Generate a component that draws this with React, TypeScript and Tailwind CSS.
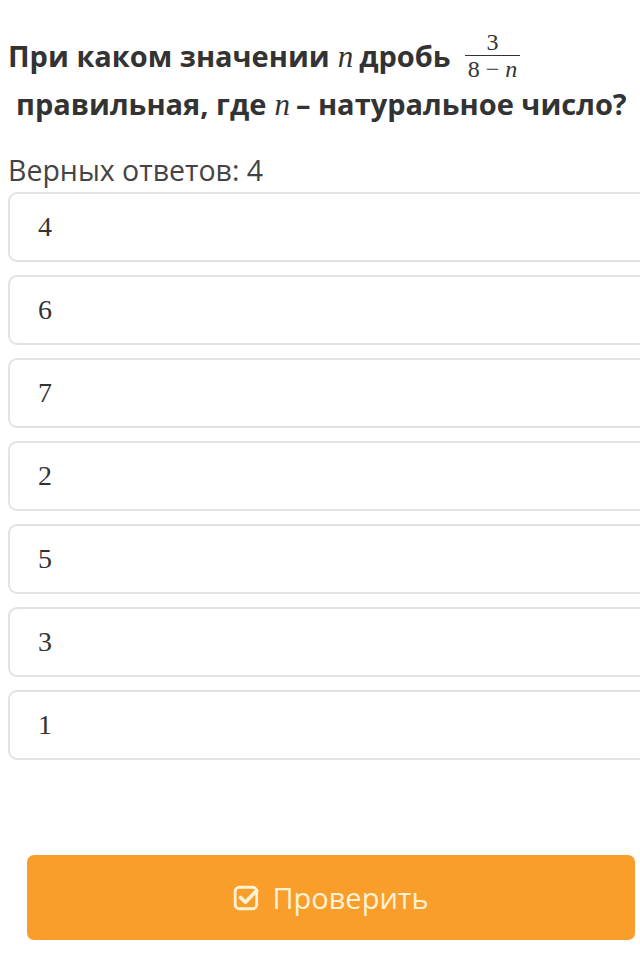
import React from "react";

const answers = ["4", "6", "7", "2", "5", "3", "1"];

function N() {
  return <span style={{ fontFamily: "'Liberation Serif', serif" }} className="italic font-normal">n</span>;
}

export default function App() {
  return (
    <div className="w-[640px] h-[962px] bg-white overflow-hidden relative" style={{ fontFamily: "'Open Sans', sans-serif" }}>
      <div className="pl-[8px] pt-[30px]">
        <div className="flex items-center h-[52px] text-[29px] font-bold text-[#333333] whitespace-nowrap">
          <span>При каком значении</span>
          <span className="ml-[8px] text-[31px]"><N /></span>
          <span className="ml-[6px]">дробь</span>
          <span className="ml-[14px] inline-flex flex-col items-center text-[24px] leading-[25px] font-normal text-[#333]" style={{ fontFamily: "'Liberation Serif', serif" }}>
            <span className="px-[2px]">3</span>
            <span className="border-t-[1.5px] border-[#333] px-[3px] pt-[1px]">8 − <span className="italic">n</span></span>
          </span>
        </div>
        <div className="flex items-center h-[44px] pl-[8px] text-[29px] font-bold text-[#333333] whitespace-nowrap">
          <span>правильная, где</span>
          <span className="ml-[8px] text-[31px]"><N /></span>
          <span className="ml-[6px]">– натуральное число?</span>
        </div>
        <div className="mt-[28px] text-[28.5px] leading-[32px] text-[#444444]">Верных ответов: 4</div>
        <div className="mt-[6px] flex flex-col gap-[13px] w-[660px]">
          {answers.map((a) => (
            <div key={a} className="h-[70px] border-2 border-[#e3e3e3] rounded-[9px] flex items-center pl-[28px] text-[28px] text-[#333]" style={{ fontFamily: "'Liberation Serif', serif" }}>
              {a}
            </div>
          ))}
        </div>
      </div>
      <div className="absolute left-[27px] top-[855px] w-[608px] h-[85px] rounded-[7px] bg-[#f99d2b] flex items-center justify-center gap-[11px] text-[#fff3d6] text-[29px]">
        <svg width="28" height="28" viewBox="0 0 26 26" fill="none">
          <rect x="2" y="3" width="20" height="20" rx="4" stroke="#fff3d6" strokeWidth="2.6" />
          <path d="M7 12.5 L11.5 17 L22 6" stroke="#fff3d6" strokeWidth="3.4" strokeLinecap="round" strokeLinejoin="round" />
        </svg>
        <span>Проверить</span>
      </div>
    </div>
  );
}
